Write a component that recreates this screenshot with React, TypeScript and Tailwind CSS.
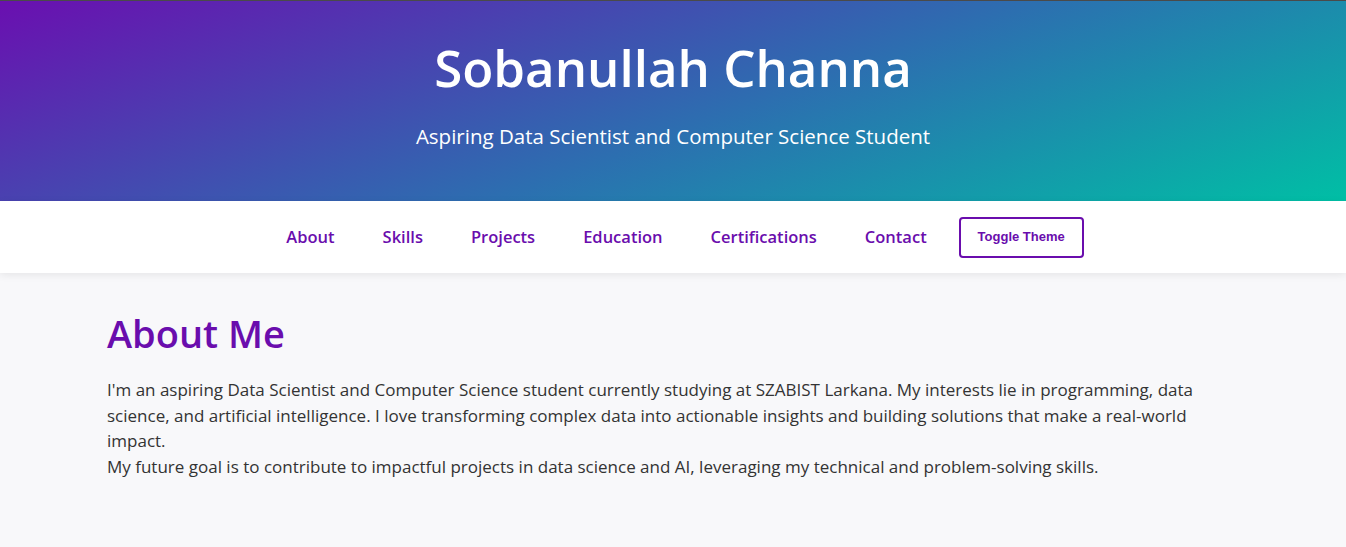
export default function App() {
  const links = ['About', 'Skills', 'Projects', 'Education', 'Certifications', 'Contact'];

  return (
    <div className="min-h-[547px] bg-[#f8f8fa] font-['Open_Sans',sans-serif]">
      {/* Header */}
      <header className="h-[201px] border-t border-[#4a4a4a] bg-[linear-gradient(160deg,#6a0fb0_0%,#2c6fb0_55%,#00bfa5_100%)] flex flex-col items-center pt-[36px] gap-[25px] text-white">
        <h1 className="text-[51px] leading-[60px] font-semibold">Sobanullah Channa</h1>
        <p className="text-[20.5px] leading-[28px]">Aspiring Data Scientist and Computer Science Student</p>
      </header>

      {/* Nav */}
      <nav className="h-[72px] bg-white shadow-[0_2px_8px_rgba(0,0,0,0.08)] flex items-center justify-center">
        <ul className="flex items-center">
          {links.map((l) => (
            <li key={l} className="mx-6">
              <a href="#" className="text-[16.5px] font-semibold text-[#6a0dad]">
                {l}
              </a>
            </li>
          ))}
          <li className="ml-2">
            <button className="h-[41px] w-[125px] border-2 border-[#6a0dad] rounded-[4px] text-[13px] font-bold text-[#6a0dad] font-['Liberation_Sans',Arial,sans-serif]">
              Toggle Theme
            </button>
          </li>
        </ul>
      </nav>

      {/* About */}
      <main className="px-[107px] pt-[37px]">
        <h2 className="text-[38px] leading-[46px] font-semibold text-[#6a0dad]">About Me</h2>
        <p className="mt-[21px] text-[17px] leading-[25.6px] text-[#333]">
          I'm an aspiring Data Scientist and Computer Science student currently studying at SZABIST Larkana. My interests lie in programming, data science, and artificial intelligence. I love transforming complex data into actionable insights and building solutions that make a real-world impact.
          <br />
          My future goal is to contribute to impactful projects in data science and AI, leveraging my technical and problem-solving skills.
        </p>
      </main>
    </div>
  );
}
